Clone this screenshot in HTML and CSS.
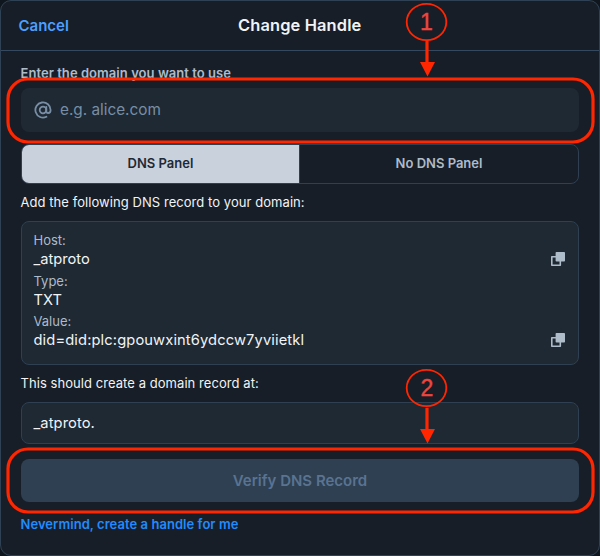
FILE: index.html
```html
<!DOCTYPE html>
<html lang="en">
<head>
<meta charset="utf-8">
<title>Change Handle</title>
<link rel="stylesheet" href="styles.css">
</head>
<body>
<main class="dialog">
  <header class="header">
    <a class="cancel">Cancel</a>
    <h1 class="title">Change Handle</h1>
    <span></span>
  </header>
  <div class="content">
    <label class="label">Enter the domain you want to use</label>
    <div class="input">
      <svg class="at" width="18" height="18" viewBox="0 0 18 18" fill="none" stroke="currentColor" stroke-width="1.8" stroke-linecap="round"><circle cx="9" cy="9" r="3.3"/><path d="M12.3 5.8v4.1c0 1.3.7 2.1 1.9 2.1 1.5 0 2.4-1.2 2.4-3A7.6 7.6 0 1 0 12.4 15.8"/></svg>
      <span class="placeholder">e.g. alice.com</span>
    </div>
    <div class="tabs">
      <div class="tab active">DNS Panel</div>
      <div class="tab">No DNS Panel</div>
    </div>
    <p class="hint hint-add">Add the following DNS record to your domain:</p>
    <div class="record">
      <div class="key">Host:</div>
      <div class="value"><span>_atproto</span>
        <svg class="copy" width="14" height="14" viewBox="0 0 14 14"><path d="M5 4.7H.8v8.5h8.5V9" fill="none" stroke="currentColor" stroke-width="1.6" stroke-linejoin="round"/><rect x="4.6" y="0" width="9.4" height="9.6" rx=".8" fill="currentColor"/></svg>
      </div>
      <div class="key">Type:</div>
      <div class="value">TXT</div>
      <div class="key">Value:</div>
      <div class="value"><span class="did">did=did:plc:gpouwxint6ydccw7yviietkl</span>
        <svg class="copy" width="14" height="14" viewBox="0 0 14 14"><path d="M5 4.7H.8v8.5h8.5V9" fill="none" stroke="currentColor" stroke-width="1.6" stroke-linejoin="round"/><rect x="4.6" y="0" width="9.4" height="9.6" rx=".8" fill="currentColor"/></svg>
      </div>
    </div>
    <p class="hint">This should create a domain record at:</p>
    <div class="result">_atproto.</div>
    <div class="verify">Verify DNS Record</div>
    <a class="never">Nevermind, create a handle for me</a>
  </div>
</main>
<svg class="marks" width="600" height="556" viewBox="0 0 600 556">
  <g fill="none" stroke="#ff2600" stroke-width="3.2">
    <rect x="8" y="79" width="585" height="63" rx="20"/>
    <rect x="8" y="449" width="585" height="63" rx="20"/>
    <path d="M427 40v24M427 408v24"/>
  </g>
  <g fill="none" stroke="#ff2600" stroke-width="1.8">
    <ellipse cx="426.5" cy="22" rx="19.8" ry="18.2"/>
    <ellipse cx="426.5" cy="388" rx="19.8" ry="18.2"/>
  </g>
  <path d="M420 62h15l-7.5 14.5zM420 429h15l-7.5 14.5z" fill="#ff2600"/>
  <g class="number" text-anchor="middle"><text x="426.5" y="29.6">1</text><text x="427" y="395.6">2</text></g>
</svg>
</body>
</html>
```
FILE: styles.css
```css
* { box-sizing: border-box; }
body {
  margin: 0;
  width: 600px;
  height: 556px;
  overflow: hidden;
  position: relative;
  background: #10161d;
  color: #f1f3f5;
  font-family: Inter, "Liberation Sans", sans-serif;
  font-size: 13px;
}
.dialog {
  height: 556px;
  border: 1px solid #2f4255;
  border-radius: 11px;
  background: #171e27;
}
.header {
  height: 50px;
  display: grid;
  grid-template-columns: 1fr auto 1fr;
  align-items: center;
  padding: 0 18px 1px 17.5px;
  border-bottom: 1px solid #344960;
}
.cancel { font-size: 15px; font-weight: 600; color: #4c9fff; }
.title { margin: 0; font-size: 16.4px; font-weight: 600; letter-spacing: 0.15px; }
.content { padding: 15px 20px 0; display: flex; flex-direction: column; }
.label { height: 22px; line-height: 15px; font-weight: 600; letter-spacing: 0.05px; margin-left: -0.5px; color: #aebbc9; }
.input {
  height: 44px;
  display: flex;
  align-items: center;
  gap: 8px;
  padding: 0 0 1px 13px;
  border-radius: 8px;
  background: #1e2933;
  color: #788ea5;
  font-size: 15.3px;
}
.tabs {
  height: 40px;
  margin-top: 12px;
  display: grid;
  grid-template-columns: 1fr 1fr;
  border: 1px solid #2e4052;
  border-radius: 8px;
  overflow: hidden;
}
.tab { display: flex; align-items: center; justify-content: center; padding-bottom: 2px; font-weight: 600; color: #aebbc9; }
.tab.active { background: #c9d1dc; color: #1e2936; border-right: 1px solid #2e4052; }
.hint { margin: 0 0 0 -0.5px; height: 37px; padding-bottom: 1px; display: flex; align-items: center; letter-spacing: 0.06px; }
.record {
  height: 144px;
  padding: 8px 13px 0 11.5px;
  border: 1px solid #2e4052;
  border-radius: 8px;
  background: #1e2933;
}
.key { height: 19px; line-height: 20px; color: #aebbc9; }
.value { height: 21.6px; line-height: 20px; display: flex; justify-content: space-between; align-items: flex-start; font-size: 14.7px; }
.did { letter-spacing: 0.12px; }
.copy { margin-top: 2.6px; color: #aebbc9; }
.result {
  height: 42px;
  padding-left: 11.5px;
  display: flex;
  align-items: center;
  border: 1px solid #2e4052;
  border-radius: 8px;
  background: #1e2933;
  font-size: 14.7px;
  letter-spacing: 0.1px;
}
.verify {
  height: 43px;
  margin-top: 15px;
  display: flex;
  align-items: center;
  justify-content: center;
  border-radius: 8px;
  background: #2e4052;
  color: #5a7391;
  font-size: 15px;
  font-weight: 600;
}
.never { margin: 14px 0 0 -0.5px; line-height: 16px; font-weight: 600; letter-spacing: 0.05px; color: #208bfe; }
.marks { position: absolute; left: 0; top: 0; }
.number { font-family: "Liberation Sans", sans-serif; font-size: 23px; fill: #ee453d; stroke: #ee453d; stroke-width: .4px; }
```
